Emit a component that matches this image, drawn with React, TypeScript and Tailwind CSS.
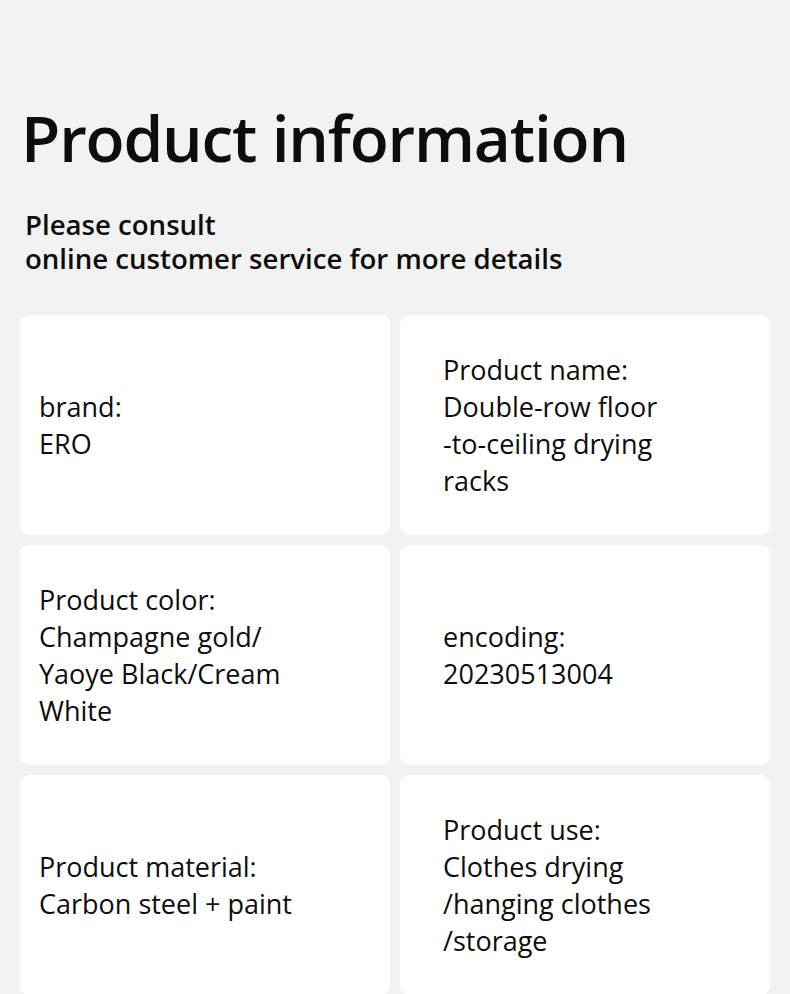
import React from "react";

const cards: { lines: string[]; right: boolean }[] = [
  { lines: ["brand:", "ERO"], right: false },
  { lines: ["Product name:", "Double-row floor", "-to-ceiling drying", "racks"], right: true },
  { lines: ["Product color:", "Champagne gold/", "Yaoye Black/Cream", "White"], right: false },
  { lines: ["encoding:", "20230513004"], right: true },
  { lines: ["Product material:", "Carbon steel + paint"], right: false },
  { lines: ["Product use:", "Clothes drying", "/hanging clothes", "/storage"], right: true },
];

export default function App() {
  return (
    <div
      className="w-[790px] h-[994px] overflow-hidden bg-[#f2f2f2] text-[#0d0d0d]"
      style={{ fontFamily: '"Open Sans", "Noto Sans", sans-serif' }}
    >
      <div className="pt-[96px] pl-[21px]">
        <h1 className="text-[64px] leading-[84px] font-semibold tracking-[-1.2px]">Product information</h1>
      </div>
      <div className="pt-[27px] pl-[25px] text-[27.6px] leading-[34px] font-semibold">
        <div>Please consult</div>
        <div>online customer service for more details</div>
      </div>
      <div className="mt-[40px] px-[20px] grid grid-cols-2 gap-[10px]">
        {cards.map((c, i) => (
          <div
            key={i}
            className={`h-[220px] bg-white rounded-[9px] flex flex-col justify-center ${c.right ? "pl-[43px]" : "pl-[19px]"}`}
          >
            {c.lines.map((l, j) => (
              <div key={j} className="text-[27px] leading-[37px]">
                {l}
              </div>
            ))}
          </div>
        ))}
      </div>
    </div>
  );
}
